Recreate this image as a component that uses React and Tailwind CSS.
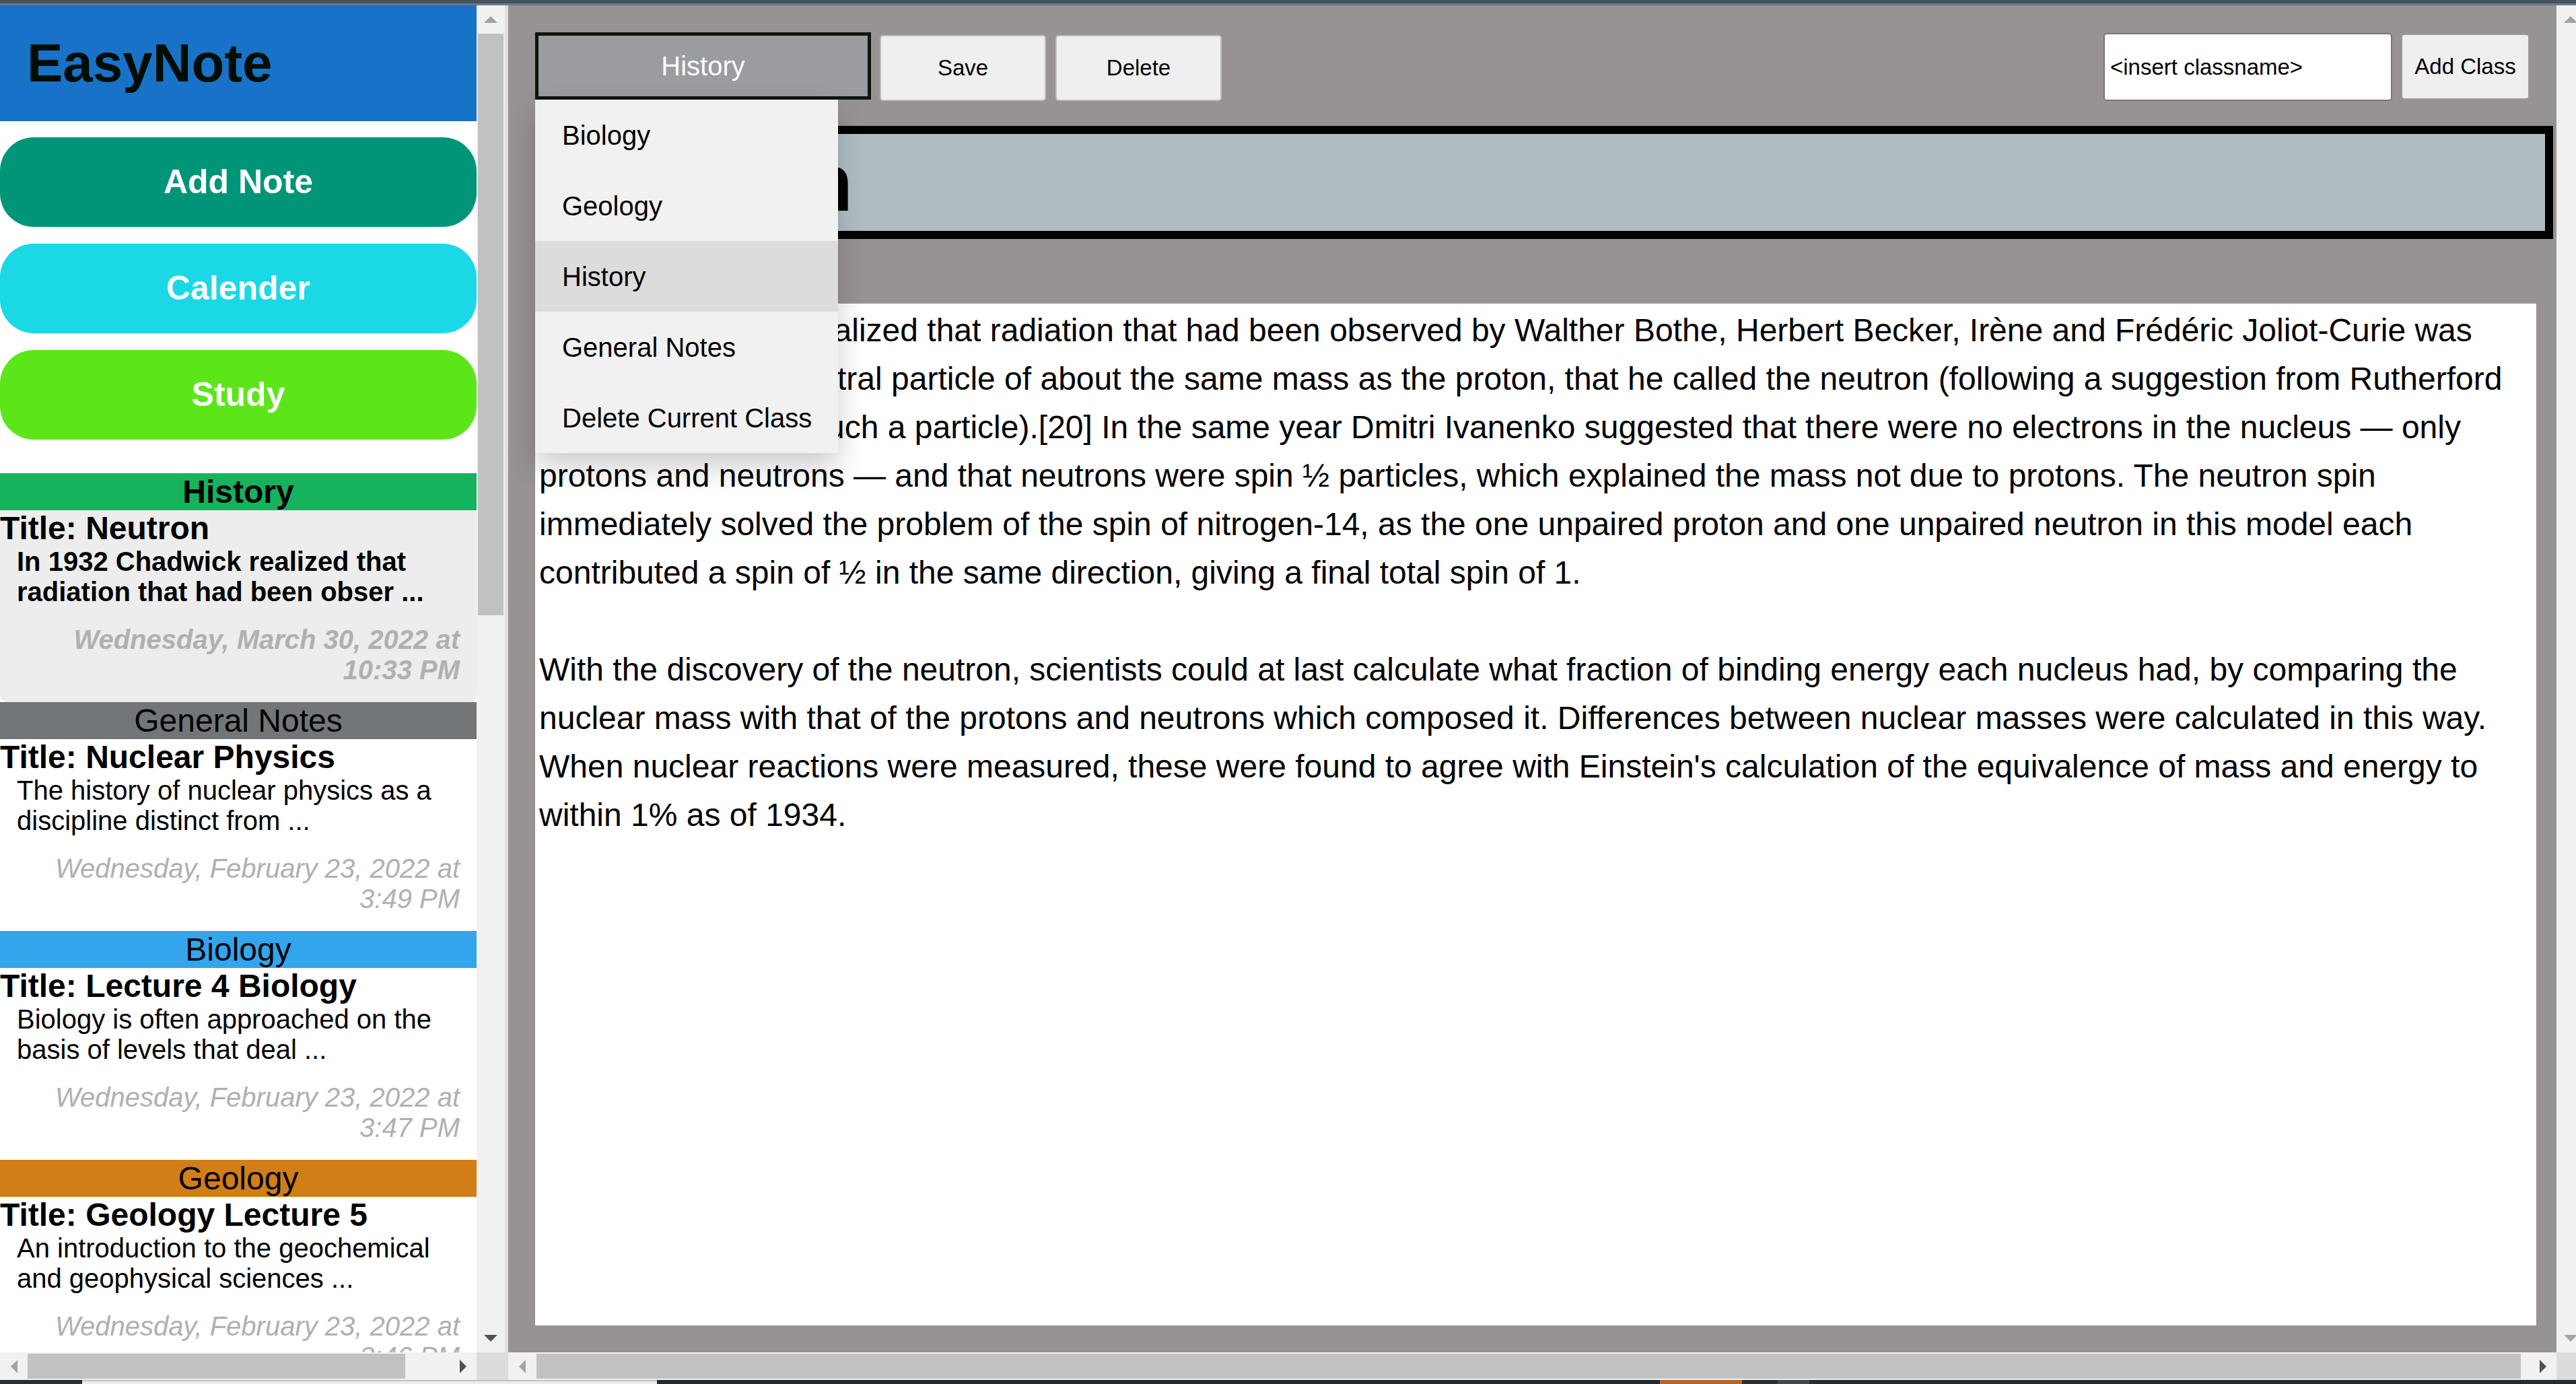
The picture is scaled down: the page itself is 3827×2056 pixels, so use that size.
import React from "react";

const notes = [
  {
    cls: "History",
    bar: "bg-[#17b25d]",
    title: "Neutron",
    body: "In 1932 Chadwick realized that radiation that had been obser ...",
    date: "Wednesday, March 30, 2022 at 10:33 PM",
    active: true,
  },
  {
    cls: "General Notes",
    bar: "bg-[#737679]",
    title: "Nuclear Physics",
    body: "The history of nuclear physics as a discipline distinct from ...",
    date: "Wednesday, February 23, 2022 at 3:49 PM",
  },
  {
    cls: "Biology",
    bar: "bg-[#33a5ed]",
    title: "Lecture 4 Biology",
    body: "Biology is often approached on the basis of levels that deal ...",
    date: "Wednesday, February 23, 2022 at 3:47 PM",
  },
  {
    cls: "Geology",
    bar: "bg-[#d17e16]",
    title: "Geology Lecture 5",
    body: "An introduction to the geochemical and geophysical sciences ...",
    date: "Wednesday, February 23, 2022 at 3:46 PM",
  },
];

const classes = ["Biology", "Geology", "History", "General Notes", "Delete Current Class"];

const Arrow = ({ dir, color }) => {
  const pts = {
    up: "0,10 10,0 20,10",
    down: "0,0 20,0 10,10",
    left: "10,0 10,20 0,10",
    right: "0,0 10,10 0,20",
  }[dir];
  const vertical = dir === "up" || dir === "down";
  return (
    <svg width={vertical ? 20 : 10} height={vertical ? 10 : 20} viewBox={vertical ? "0 0 20 10" : "0 0 10 20"}>
      <polygon points={pts} fill={color} />
    </svg>
  );
};

function VScroll({ thumb }) {
  return (
    <div className="w-[42px] h-full flex flex-col bg-[#f1f1f1]">
      <div className="h-[42px] flex items-center justify-center">
        <Arrow dir="up" color="#a3a3a3" />
      </div>
      {thumb && <div className="mx-[2px] h-[864px] bg-[#c1c1c1]" />}
      <div className="flex-1" />
      <div className="h-[42px] flex items-center justify-center">
        <Arrow dir="down" color={thumb ? "#505050" : "#a3a3a3"} />
      </div>
    </div>
  );
}

function NoteItem({ note }) {
  const { cls, bar, title, body, date, active } = note;
  return (
    <div>
      <div className={`h-[55px] ${bar} text-center text-[48px] leading-[55px] ${active ? "font-bold" : ""}`}>
        {cls}
      </div>
      <div className={`${active ? "bg-[#ededed] rounded-b-[12px]" : "bg-white"} pb-[25px]`}>
        <div className="text-[48px] font-bold leading-[54px] whitespace-nowrap">Title: {title}</div>
        <div className={`px-[25px] text-[40px] leading-[45px] ${active ? "font-bold" : ""}`}>{body}</div>
        <div
          className={`mt-[26px] px-[25px] text-right text-[40px] leading-[45px] italic text-[#b0b0b0] ${
            active ? "font-bold" : ""
          }`}
        >
          {date}
        </div>
      </div>
    </div>
  );
}

function Sidebar() {
  return (
    <div className="w-[708px] h-full overflow-hidden bg-white">
      <div className="h-[172px] bg-[#1872c8] flex items-center pl-[40px]">
        <h1 className="text-[80px] font-bold text-[#010d01]">EasyNote</h1>
      </div>
      <div className="mt-[24px] flex flex-col gap-[25px]">
        <button className="h-[133px] rounded-[50px] bg-[#009578] text-white text-[50px] font-bold">Add Note</button>
        <button className="h-[133px] rounded-[50px] bg-[#1ad8e5] text-white text-[50px] font-bold">Calender</button>
        <button className="h-[133px] rounded-[50px] bg-[#5ce619] text-white text-[50px] font-bold">Study</button>
      </div>
      <div className="mt-[50px]">
        {notes.map((n) => (
          <NoteItem key={n.cls} note={n} />
        ))}
      </div>
    </div>
  );
}

function Editor() {
  return (
    <div className="w-[3043px] h-full bg-[#989393] overflow-hidden pl-[40px] pt-[40px]">
      <div className="w-[2963px] flex justify-between items-start">
        <div className="flex items-start">
          <div className="relative">
            <div className="w-[499px] h-[100px] border-[5px] border-[#0e140e] bg-[#9a9c9f] flex items-center justify-center text-white text-[40px]">
              History
            </div>
            <div className="absolute left-0 top-full z-10 w-[450px] bg-[#f1f1f1] shadow-[0_20px_40px_0_rgba(0,0,0,0.2)]">
              {classes.map((c) => (
                <div
                  key={c}
                  className={`h-[105px] flex items-center px-[40px] text-[40px] whitespace-nowrap ${
                    c === "History" ? "bg-[#dcdcdc]" : ""
                  }`}
                >
                  {c}
                </div>
              ))}
            </div>
          </div>
          <button className="ml-[13px] mt-[4px] w-[247px] h-[98px] bg-[#efefef] border-2 border-[#bdbdbd] rounded-[5px] text-[33px]">
            Save
          </button>
          <button className="ml-[14px] mt-[4px] w-[247px] h-[98px] bg-[#efefef] border-2 border-[#bdbdbd] rounded-[5px] text-[33px]">
            Delete
          </button>
        </div>
        <div className="flex items-start">
          <input
            readOnly
            value="<insert classname>"
            className="mt-[1px] w-[429px] h-[101px] bg-white border-2 border-[#767676] rounded-[5px] pl-[8px] text-[33px] text-black outline-none"
          />
          <button className="ml-[13px] mt-[2px] w-[191px] h-[98px] bg-[#efefef] border-2 border-[#9a9a9a] rounded-[5px] text-[33px]">
            Add Class
          </button>
        </div>
      </div>

      <div className="mt-[37px] w-[2998px] h-[168px] border-[12px] border-black bg-[#b0bec3] flex items-center">
        <span className="text-[120px] font-bold leading-none">Neutron</span>
      </div>

      <div className="mt-[96px] w-[2973px] h-[1518px] bg-white px-[6px] pt-[4px] text-[48px] leading-[72px]">
        <p>
          In 1932 Chadwick realized that radiation that had been observed by Walther Bothe, Herbert Becker, Irène and
          Frédéric Joliot-Curie was actually due to a neutral particle of about the same mass as the proton, that he
          called the neutron (following a suggestion from Rutherford about the need for such a particle).[20] In the
          same year Dmitri Ivanenko suggested that there were no electrons in the nucleus — only protons and neutrons —
          and that neutrons were spin ½ particles, which explained the mass not due to protons. The neutron spin
          immediately solved the problem of the spin of nitrogen-14, as the one unpaired proton and one unpaired neutron
          in this model each contributed a spin of ½ in the same direction, giving a final total spin of 1.
        </p>
        <p className="mt-[72px]">
          With the discovery of the neutron, scientists could at last calculate what fraction of binding energy each
          nucleus had, by comparing the nuclear mass with that of the protons and neutrons which composed it.
          Differences between nuclear masses were calculated in this way. When nuclear reactions were measured, these
          were found to agree with Einstein's calculation of the equivalence of mass and energy to within 1% as of 1934.
        </p>
      </div>
    </div>
  );
}

export default function App() {
  return (
    <div className="w-[3827px] h-[2056px] flex flex-col overflow-hidden font-['Liberation_Sans',Arial,sans-serif] text-black">
      <div className="h-[5px] bg-[#44535f]" />
      <div className="h-[3px] bg-[#6c7a84]" />

      <div className="flex h-[2042px]">
        {/* left pane */}
        <div className="w-[755px] flex flex-col">
          <div className="flex h-[2001px]">
            <Sidebar />
            <VScroll thumb />
            <div className="w-[5px] bg-[#dedede]" />
          </div>
          <div className="flex h-[41px]">
            <div className="w-[708px] bg-[#f1f1f1] flex items-center">
              <div className="w-[41px] flex justify-center">
                <Arrow dir="left" color="#a3a3a3" />
              </div>
              <div className="w-[561px] h-[37px] bg-[#c1c1c1]" />
              <div className="flex-1" />
              <div className="w-[41px] flex justify-center">
                <Arrow dir="right" color="#505050" />
              </div>
            </div>
            <div className="flex-1 bg-[#dcdcdc]" />
          </div>
        </div>

        {/* main pane */}
        <div className="flex-1 flex flex-col">
          <div className="flex h-[2001px]">
            <Editor />
            <div className="w-[29px] overflow-hidden">
              <VScroll />
            </div>
          </div>
          <div className="flex h-[41px]">
            <div className="w-[3043px] bg-[#f1f1f1] flex items-center">
              <div className="w-[42px] flex justify-center">
                <Arrow dir="left" color="#a3a3a3" />
              </div>
              <div className="w-[2948px] h-[37px] bg-[#c1c1c1]" />
              <div className="flex-1" />
              <div className="w-[41px] flex justify-center">
                <Arrow dir="right" color="#505050" />
              </div>
            </div>
            <div className="flex-1 bg-[#dcdcdc]" />
          </div>
        </div>
      </div>

      <div className="h-[6px] flex">
        <div className="w-[122px] bg-[#2a2d31]" />
        <div className="w-[854px] bg-[#ececec] border-t-2 border-[#c2c2c2]" />
        <div className="w-[1490px] bg-[#25292e]" />
        <div className="w-[122px] bg-[#b5662a]" />
        <div className="w-[53px] bg-[#2b2f33]" />
        <div className="w-[47px] bg-[#444749]" />
        <div className="flex-1 bg-[#26292d]" />
      </div>
    </div>
  );
}
